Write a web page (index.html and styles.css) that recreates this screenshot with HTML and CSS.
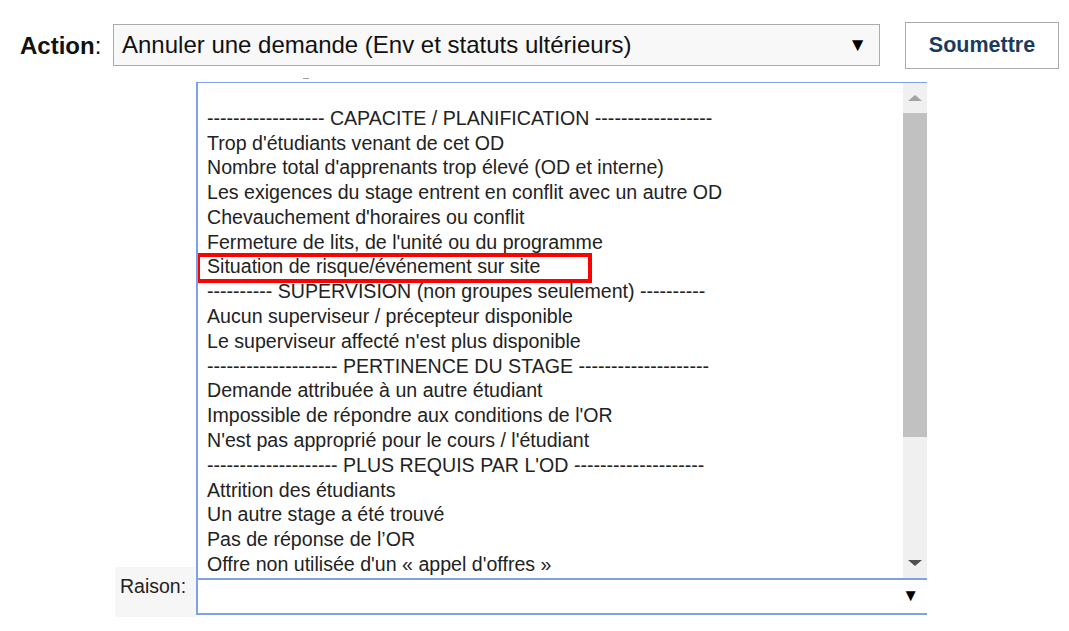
FILE: index.html
```html
<!DOCTYPE html>
<html lang="fr">
<head>
    <meta charset="UTF-8">
    <title>Annuler une demande</title>
    <link rel="stylesheet" href="styles.css">
</head>
<body>
    <div class="page">
        <div class="action-row">
            <label class="action-label"><b>Action</b>:</label>
            <div class="select">
                <span>Annuler une demande (Env et statuts ultérieurs)</span>
                <span class="select-arrow">▼</span>
            </div>
            <button class="submit">Soumettre</button>
        </div>

        <div class="reason-row">
            <div class="reason-label">Raison:</div>
            <div class="reason-field">
                <span class="reason-arrow">▼</span>

                <div class="dropdown">
                    <span class="tick"></span>
                    <ul class="options">
                        <li class="empty"></li>
                        <li>------------------ CAPACITE / PLANIFICATION ------------------</li>
                        <li>Trop d'étudiants venant de cet OD</li>
                        <li>Nombre total d'apprenants trop élevé (OD et interne)</li>
                        <li>Les exigences du stage entrent en conflit avec un autre OD</li>
                        <li>Chevauchement d'horaires ou conflit</li>
                        <li>Fermeture de lits, de l'unité ou du programme</li>
                        <li class="marked">Situation de risque/événement sur site</li>
                        <li>---------- SUPERVISION (non groupes seulement) ----------</li>
                        <li>Aucun superviseur / précepteur disponible</li>
                        <li>Le superviseur affecté n'est plus disponible</li>
                        <li>-------------------- PERTINENCE DU STAGE --------------------</li>
                        <li>Demande attribuée à un autre étudiant</li>
                        <li>Impossible de répondre aux conditions de l'OR</li>
                        <li>N'est pas approprié pour le cours / l'étudiant</li>
                        <li>-------------------- PLUS REQUIS PAR L'OD --------------------</li>
                        <li>Attrition des étudiants</li>
                        <li>Un autre stage a été trouvé</li>
                        <li>Pas de réponse de l’OR</li>
                        <li>Offre non utilisée d'un « appel d'offres »</li>
                    </ul>
                    <div class="scrollbar">
                        <div class="scroll-btn"><span class="arrow-up"></span></div>
                        <div class="scroll-thumb"></div>
                        <div class="scroll-track"></div>
                        <div class="scroll-btn"><span class="arrow-down"></span></div>
                    </div>
                </div>
            </div>
        </div>
    </div>
</body>
</html>
```

FILE: styles.css
```css
/* Base */
* {
    margin: 0;
    padding: 0;
    box-sizing: border-box;
}

body {
    background: #fff;
    color: #111;
    font-family: 'Liberation Sans', Arial, sans-serif;
}

.page {
    padding: 22px 0 0 20px;
}

/* Action row */
.action-row {
    display: flex;
    align-items: center;
    height: 47px;
}

.action-label {
    font-size: 24px;
    color: #111;
    width: 93px;
}

.select {
    width: 767px;
    height: 42px;
    border: 1px solid #ababab;
    background: #f8f8f8;
    display: flex;
    align-items: center;
    justify-content: space-between;
    padding: 0 12px 0 8px;
    font-size: 24px;
    color: #111;
    margin-top: -2px;
}

.select-arrow {
    font-size: 19px;
    color: #000;
}

.submit {
    margin-left: 25px;
    width: 154px;
    height: 47px;
    background: #fff;
    border: 1px solid #ababab;
    font-family: inherit;
    font-size: 21.5px;
    font-weight: bold;
    color: #183b5e;
}

/* Reason row */
.reason-row {
    display: flex;
    margin: 498px 0 0 95px;
}

.reason-label {
    width: 81px;
    height: 50px;
    background: #f6f6f6;
    padding: 8px 0 0 5px;
    font-size: 19.5px;
    color: #222;
}

.reason-field {
    position: relative;
    width: 731px;
    height: 37px;
    margin-top: 11px;
    border-top: 2px solid #7da2e8;
    border-bottom: 2px solid #7da2e8;
    border-left: 2px solid #7da2e8;
}

.reason-arrow {
    position: absolute;
    right: 8px;
    top: 6px;
    font-size: 17px;
    color: #000;
}

/* Open list */
.dropdown {
    position: absolute;
    left: -2px;
    bottom: 100%;
    margin-bottom: 2px;
    width: 731px;
    height: 496px;
    background: #fff;
    border-top: 1px solid #7da2e8;
    border-left: 2px solid #7da2e8;
    display: flex;
}

.tick {
    position: absolute;
    left: 105px;
    top: -5px;
    width: 6px;
    height: 1px;
    background: #9a9a9a;
}

.options {
    list-style: none;
    flex: 1;
    padding-left: 9px;
    font-size: 19.6px;
    line-height: 24.78px;
    color: #222;
    white-space: nowrap;
    overflow: hidden;
}

.options .empty {
    height: 22.8px;
}

.marked {
    position: relative;
}

.marked::after {
    content: '';
    position: absolute;
    box-sizing: border-box;
    left: -11px;
    top: -1.5px;
    width: 396px;
    height: 30px;
    border: 4px solid #ff0000;
}

/* Scrollbar */
.scrollbar {
    width: 24px;
    display: flex;
    flex-direction: column;
    background: #f0f0f0;
}

.scroll-btn {
    height: 30px;
    display: flex;
    align-items: center;
    justify-content: center;
}

.scroll-thumb {
    height: 324px;
    background: #c1c1c1;
}

.scroll-track {
    flex: 1;
}

.arrow-up {
    border-left: 7px solid transparent;
    border-right: 7px solid transparent;
    border-bottom: 6px solid #a3a3a3;
}

.arrow-down {
    border-left: 7px solid transparent;
    border-right: 7px solid transparent;
    border-top: 6px solid #505050;
}
```
